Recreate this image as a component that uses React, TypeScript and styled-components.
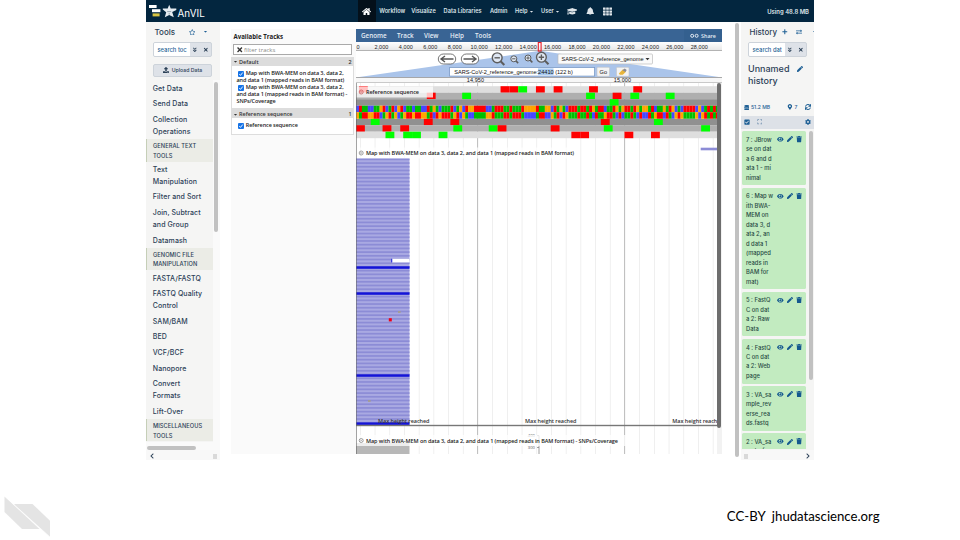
import React from "react";
import styled, { createGlobalStyle } from "styled-components";
import {
  FaHome, FaGraduationCap, FaBell, FaTh, FaRegStar, FaCaretDown, FaAngleDoubleDown,
  FaTimes, FaUpload, FaPlus, FaExchangeAlt, FaPen, FaDatabase, FaMapMarkerAlt, FaSync,
  FaCheckSquare, FaExpand, FaCog, FaEye, FaTrash, FaChevronLeft, FaChevronRight,
} from "react-icons/fa";

const UI = `Inter, Roboto, "Liberation Sans", sans-serif`;
const TRACK = `"Open Sans", "Noto Sans", sans-serif`;
const ARIAL = `"Liberation Sans", Arial, sans-serif`;

const Global = createGlobalStyle`
  * { box-sizing: border-box; }
  html, body { margin: 0; padding: 0; background: #fff; overflow: hidden; }
  svg { display: block; flex: none; }
`;

const Slide = styled.main`
  width: 960px; height: 540px; display: flex; flex-direction: column; overflow: hidden;
  background: #fff;
`;
const Shot = styled.section`
  width: 668px; height: 460px; margin-left: 146px; display: flex; flex-direction: column; flex: none;
  font-family: ${UI};
`;

/* ---- navigation bar ---- */
const Nav = styled.header`
  height: 22px; flex: none; display: flex; align-items: center; background: #03263f; color: #dfe5ea;
  font-size: 5.6px; font-weight: 600; white-space: nowrap;
`;
const Brand = styled.div`
  width: 212px; height: 22px; padding-left: 3px; display: flex; align-items: center;
`;
const BrandName = styled.span`
  font: 400 9.8px ${UI}; color: #fff; margin: 4px 0 0 0.5px; letter-spacing: 0.1px;
`;
const HomeTab = styled.div`
  width: 17.6px; height: 22px; background: #04101a; display: grid; place-items: center; color: #fff;
`;
const NavItem = styled.span<{ $w: number; $s?: number }>`
  width: ${p => p.$w}px; display: flex; align-items: center; gap: 1.5px; letter-spacing: ${p => p.$s ?? 0}px;
`;
const Usage = styled.span`margin-left: auto; padding-right: 5px; font-size: 5.9px;`;

/* ---- workspace ---- */
const Work = styled.div`height: 438px; display: flex;`;

const ToolPanel = styled.aside`
  width: 74px; height: 438px; background: #f5f5f4; display: flex; flex-direction: column; color: #2c4157;
`;
const PanelHead = styled.div<{ $left: number }>`
  height: 19.5px; padding-left: ${p => p.$left}px; display: flex; align-items: center; font-size: 8px;
  font-weight: 500; color: #2c4157; flex: none; overflow: hidden;
`;
const HeadIcon = styled.span<{ $ml: number }>`margin-left: ${p => p.$ml}px; color: #1f6095;`;
const Search = styled.div<{ $ml: number }>`
  width: 59px; height: 14.5px; margin: 0.7px 0 0 ${p => p.$ml}px; display: flex; border: 0.6px solid #cdd3da; border-radius: 2px;
  background: #dee2e8; overflow: hidden; flex: none; color: #2c4157;
`;
const SearchText = styled.span`
  width: 36px; background: #fff; padding-left: 3.5px; font-size: 5.8px; line-height: 14px; color: #2a6496; white-space: nowrap;
  overflow: hidden; font-weight: 500;
`;
const SearchBtn = styled.span`flex: 1; display: grid; place-items: center;`;
const Upload = styled.div`
  width: 59px; height: 13px; margin: 7.3px 0 0 7px; flex: none; border: 0.6px solid #cdd3da; border-radius: 2px;
  background: #dee2e8; display: flex; align-items: center; justify-content: center; gap: 3px; font-size: 5.2px;
  font-weight: 500; white-space: nowrap;
`;
const ToolArea = styled.div`height: 361.5px; margin-top: 3.4px; display: flex; flex: none;`;
const ToolList = styled.div`width: 67px; flex: none;`;
const Tool = styled.div`
  padding: 2.3px 0 1.3px 6.8px; font-size: 7px; line-height: 12px; font-weight: 500; letter-spacing: 0.09px;
  white-space: pre; color: #2c4157;
`;
const Category = styled.div`
  height: 22.4px; padding: 2px 0 0 6px; border-left: 1px solid #c6cfb8; background: #ebece6;
  font-size: 5.7px; line-height: 9.5px; font-weight: 500; letter-spacing: 0.06px; white-space: pre; color: #2c4157;
`;
const Rail = styled.div`width: 7px; background: #fafafa; padding: 1.5px 0 0 1.3px;`;
const Thumb = styled.div<{ $h: number; $w?: number }>`
  width: ${p => p.$w ?? 3.6}px; height: ${p => p.$h}px; border-radius: 2px; background: #c1c1c1;
`;
const HRail = styled.div`height: 8px; padding: 4.2px 0 0 1px; background: #fafafa; flex: none;`;
const PanelFoot = styled.div`
  height: 10px; display: flex; align-items: center; justify-content: space-between; padding: 2px 3px 0; color: #2c4157;
  margin-top: auto; flex: none; background: #f8f8f8;
`;
const Grip = styled.span`width: 4px; height: 5px; background: #d9d9d9;`;

/* ---- track selector ---- */
const Selector = styled.section`
  width: 125px; height: 425px; margin: 7px 0 0 11px; background: #fafafa; font-family: ${TRACK}; color: #222;
  display: flex; flex-direction: column; flex: none;
`;
const SelTitle = styled.h2`margin: 3px 0 0 2.5px; font-size: 6.1px; font-weight: 700; line-height: 10px;`;
const Filter = styled.div`
  width: 118.5px; height: 11px; margin: 2px 0 1.8px 2px; border: 1px solid #aaa; background: #fff; display: flex; align-items: center;
  padding-left: 1.5px; gap: 1px; font-size: 6px; color: #888; flex: none;
`;
const Group = styled.div`width: 122.5px; border: 0.5px solid #ddd; background: #fff; flex: none;`;
const GroupHead = styled.div`
  height: 8.3px; display: flex; align-items: center; background: #dcdcdc; padding: 0 1px 0 1px; font-size: 5.5px; font-weight: 600;
  gap: 1px; color: #333;
`;
const Count = styled.span`margin-left: auto; font-size: 5.4px;`;
const TrackItem = styled.div`
  padding-left: 4.5px; font-size: 5.5px; line-height: 6.85px; font-weight: 600; white-space: pre; letter-spacing: -0.09px;
`;
const FirstLine = styled.div`display: flex; align-items: center; gap: 1.8px; padding-left: 1.5px; height: 6.85px;`;
const GroupBody = styled.div<{ $h: number; $t: number }>`height: ${p => p.$h}px; padding-top: ${p => p.$t}px;`;

/* ---- genome browser ---- */
const Browser = styled.section`
  width: 366px; height: 425px; margin-top: 7px; display: flex; flex-direction: column; flex: none; font-family: ${TRACK};
`;
const Menu = styled.div`
  height: 13px; background: #396494; color: #e4ecf5; display: flex; align-items: center; font-size: 6.3px; font-weight: 600;
  flex: none; white-space: nowrap;
`;
const MenuItem = styled.span<{ $w: number }>`width: ${p => p.$w}px;`;
const Share = styled.span`
  margin-left: auto; width: 38px; height: 12px; display: flex; align-items: center; justify-content: center; gap: 2px;
  background: #34608f; font-size: 5.4px;
`;
const Overview = styled.svg`font-family: ${ARIAL};`;
const Tracks = styled.div`display: flex; height: 371px;`;
const VBar = styled.div`width: 5px; background: #f2f2f2;`;
const VThumb = styled.div`width: 4.4px; height: 345px; background: #6d6d6d; border-radius: 2px;`;

/* ---- history ---- */
const Divider = styled.div`width: 19px; padding: 1px 0 0 12.8px; background: #fff; flex: none;`;
const History = styled.aside`
  width: 73px; height: 438px; background: #f5f5f4; color: #2c4157; display: flex; flex-direction: column; overflow: hidden; flex: none;
`;
const HistTitle = styled.div`
  height: 24px; margin: 6.6px 0 0 7px; display: flex; gap: 7.5px; font-size: 9px; line-height: 11.3px; font-weight: 500; white-space: pre;
  flex: none;
`;
const PenSlot = styled.span`padding-top: 3px; color: #1f6095;`;
const Stats = styled.div`
  height: 12px; margin-top: 14px; padding: 0 3px 0 3px; display: flex; align-items: center; gap: 1.5px; color: #1f6095;
  font-size: 5.1px; flex: none; font-weight: 500;
`;
const Push = styled.span<{ $m?: number }>`margin-left: ${p => (p.$m ? `${p.$m}px` : "auto")};`;
const Bulk = styled.div`
  height: 13px; margin-top: 2.4px; padding: 0 3px; background: #dde1e7; display: flex; align-items: center; color: #1f6095; flex: none;
`;
const CardArea = styled.div`height: 320.5px; display: flex; overflow: hidden; flex: none; padding: 2.3px 0 0 1.3px;`;
const Cards = styled.div`width: 64px; display: flex; flex-direction: column; gap: 2.3px; flex: none;`;
const Card = styled.article`
  background: #c2ebc0; border-radius: 1.5px; padding: 3.8px 3px 3.2px 3.7px; display: flex; flex: none; font-size: 5.8px;
  line-height: 9.47px; color: #294b45; font-weight: 500;
`;
const CardText = styled.div`width: 30.4px; white-space: pre;`;
const CardIcons = styled.div`display: flex; gap: 3.3px; height: 9.4px; align-items: center; color: #14588f; margin-left: 0.6px;`;

/* ---- slide footer ---- */
const Footer = styled.footer`flex: 1; display: flex; justify-content: space-between; padding: 36px 80.4px 0 4px;`;
const Credit = styled.p`margin: 11px 0 0; font: 400 13.2px Lato, sans-serif; line-height: 18px; color: #000; white-space: pre;`;

/* Bases shown across the view, 2.95px each */
const SEQ = ("CTAACCAAGTCATCGTCAACAACCTAGACAAATCAGCTGGTTTTCCATTTAATAAATGGGGTAAGGCTAGACTTTATTATGATTCAATGAGTTATGAGGATCAAGATGCACTTTTCGCATATACAAAACGTAATG").slice(0, 123);
const BP = 2.95;
const COLOR: Record<string, string> = { A: "#00bf00", C: "#4747ff", G: "#ffa500", T: "#ff0000" };
const PAIR: Record<string, string> = { A: "T", T: "A", C: "G", G: "C" };
const FWD: Record<string, string> = { TAA: "#f00", TAG: "#f00", TGA: "#f00", ATG: "#0f0", CTG: "#0f0", TTG: "#0f0" };
const REV: Record<string, string> = { TTA: "#f00", CTA: "#f00", TCA: "#f00", CAT: "#0f0", CAG: "#0f0", CAA: "#0f0" };
const ROWH = 6.5;
const FRAMES = [
  { y: 3.2, fill: "#dedede", frame: 1, table: FWD },
  { y: 9.7, fill: "#afafaf", frame: 0, table: FWD },
  { y: 16.2, fill: "#909090", frame: 2, table: FWD },
  { y: 35.7, fill: "#909090", frame: 2, table: REV },
  { y: 42.2, fill: "#afafaf", frame: 0, table: REV },
  { y: 48.7, fill: "#dedede", frame: 1, table: REV },
];

function Sequence() {
  return (
    <g>
      {FRAMES.map((f, k) => (
        <g key={k}>
          <rect x={0} y={f.y} width={361.5} height={ROWH} fill={f.fill} />
          {SEQ.split("").map((_, i) => {
            const c = i % 3 === f.frame ? f.table[SEQ.slice(i, i + 3)] : undefined;
            return c ? <rect key={i} x={i * BP} y={f.y} width={BP * 3} height={ROWH} fill={c} /> : null;
          })}
        </g>
      ))}
      {SEQ.split("").map((b, i) => (
        <g key={i}>
          <rect x={i * BP} y={22.7} width={BP + 0.15} height={ROWH} fill={COLOR[b]} />
          <rect x={i * BP} y={29.2} width={BP + 0.15} height={ROWH} fill={COLOR[PAIR[b]]} />
        </g>
      ))}
    </g>
  );
}

const Label = ({ y, w, tw, text, bg, dot }: { y: number; w: number; tw: number; text: string; bg: string; dot: string }) => (
  <g>
    <rect x={0} y={y - 5.5} width={w} height={11} fill={bg} />
    <circle cx={5.2} cy={y} r={2} fill="none" stroke={dot} strokeWidth={0.8} />
    <path d={`M4.3 ${y - 0.9}l1.8 1.8m0-1.8l-1.8 1.8`} stroke={dot} strokeWidth={0.5} />
    <text x={10} y={y + 2} fontSize={5.5} fontWeight={600} textLength={tw} fill="#222">{text}</text>
  </g>
);

const READ = 3.71;
const BLUE_READS = [183.3, 209.3, 291.3, 339.4];

function TrackCanvas() {
  const reads = Array.from({ length: 72 }, (_, i) => 75.5 + i * READ);
  const grid = Array.from({ length: 25 }, (_, i) => 4 + i * 14.7);
  return (
    <svg width={361} height={371} viewBox="0 0 361 371" fontFamily='"Open Sans", "Noto Sans", sans-serif'>
      <rect width={361} height={371} fill="#fff" />
      {grid.map((x, i) => <rect key={i} x={x} y={0} width={0.7} height={371} fill="#e9e9e9" />)}
      <rect x={121.2} y={0} width={0.8} height={371} fill="#b4b4b4" />
      <rect x={268} y={0} width={0.8} height={371} fill="#b4b4b4" />
      <Sequence />
      <Label y={9} w={77} tw={53} text="Reference sequence" bg="rgba(255,255,255,.76)" dot="#c55" />
      <rect x={0} y={75} width={53.5} height={267} fill="#a9a9e2" />
      {reads.map((y, i) => <rect key={i} x={0} y={y} width={53.5} height={1.7} fill="#8c8cd6" />)}
      {BLUE_READS.map(y => <rect key={y} x={0} y={y} width={53.5} height={2.5} fill="#1414d8" />)}
      <rect x={36} y={175.8} width={17.5} height={3.6} fill="#fff" />
      <rect x={35} y={175.8} width={1.3} height={3.6} fill="#3c3cda" />
      <rect x={32.8} y={235.2} width={3} height={3.2} fill="#f00018" />
      <path d="M42 229h2.6M12 318h2.6" stroke="#a8a080" strokeWidth={1.6} />
      <rect x={344.7} y={64.7} width={17} height={2.6} fill="#8c8cd6" />
      <Label y={70} w={221} tw={208} text="Map with BWA-MEM on data 3, data 2, and data 1 (mapped reads in BAM format)" bg="rgba(255,255,255,.7)" dot="#888" />
      <rect x={0} y={341.8} width={361} height={1.4} fill="#777" />
      {[22, 169, 316.3].map(x => (
        <text key={x} x={x} y={340.4} fontSize={5.5} fontWeight={600} textLength={51.5} fill="#333">Max height reached</text>
      ))}
      <rect x={0} y={360} width={53.5} height={11} fill="#b8b8b8" />
      <text x={171.8} y={354.2} fontSize={4.2} fill="#555">400</text>
      <text x={171.8} y={366} fontSize={4.2} fill="#555">300</text>
      <path d="M181 352.6h2v18.4M181 364.5h2" fill="none" stroke="#777" strokeWidth={0.7} />
      <Label y={357.5} w={272} tw={252} text="Map with BWA-MEM on data 3, data 2, and data 1 (mapped reads in BAM format) - SNPs/Coverage" bg="rgba(255,255,255,.75)" dot="#888" />
      <rect x={0} y={0} width={0.6} height={371} fill="#666" />
    </svg>
  );
}

const Magnifier = ({ x, y, r, plus }: { x: number; y: number; r: number; plus?: boolean }) => (
  <g stroke="#5d5d5d" fill="none" strokeWidth={r > 3 ? 1.4 : 1}>
    <circle cx={x} cy={y} r={r} fill="#dfe7f3" />
    <path d={`M${x + r * 0.7} ${y + r * 0.7}l${r * 0.75} ${r * 0.75}`} strokeWidth={r > 3 ? 2.1 : 1.5} />
    <path d={`M${x - r * 0.55} ${y}h${r * 1.1}${plus ? `M${x} ${y - r * 0.55}v${r * 1.1}` : ""}`} />
  </g>
);

const PanArrow = ({ x, flip }: { x: number; flip?: boolean }) => (
  <g transform={`translate(${x} 17) scale(${flip ? -1 : 1} 1)`} fill="none" stroke="#555">
    <rect x={-8.7} y={-5} width={17.4} height={10} rx={5} fill="#fff" strokeWidth={0.8} />
    <path d="M6.5 0h-12M-2 -3l-4 3l4 3" strokeWidth={1.4} />
  </g>
);

function OverviewBar() {
  const ticks = Array.from({ length: 15 }, (_, i) => i);
  return (
    <Overview width={366} height={41} viewBox="0 0 366 41">
      <defs>
        <linearGradient id="scale" x1="0" x2="0" y1="0" y2="1">
          <stop offset="0" stopColor="#fff" /><stop offset="1" stopColor="#e6e6e6" />
        </linearGradient>
      </defs>
      <rect width={366} height={8.6} fill="url(#scale)" />
      <rect y={8.3} width={366} height={0.7} fill="#999" />
      {ticks.map(i => (
        <text key={i} x={i === 0 ? 0.6 : 25.4 + (i - 1) * 24.45} y={6.8} fontSize={5.5} textAnchor={i ? "middle" : "start"} fill="#222"
          textLength={i === 0 ? 3 : i < 5 ? 14 : 17.2}>
          {i === 0 ? "0" : `${i * 2},000`}
        </text>
      ))}
      <path d="M182.5 9h3L366 35.5H0z" fill="#aac4ea" />
      <rect x={182.3} y={0.5} width={2.8} height={8.6} fill="none" stroke="#e8202a" strokeWidth={1.1} />
      <PanArrow x={91} />
      <PanArrow x={114} flip />
      <Magnifier x={141.2} y={15.8} r={4.9} />
      <Magnifier x={157.8} y={16.8} r={3} />
      <Magnifier x={172} y={16} r={3} plus />
      <Magnifier x={185.4} y={15.2} r={4.9} plus />
      <rect x={202} y={12} width={94.5} height={10} rx={1} fill="#fafafa" stroke="#bbb" strokeWidth={0.7} />
      <text x={205.5} y={19} fontSize={5.6} textLength={82} fill="#111">SARS-CoV-2_reference_genome</text>
      <path d="M289.5 16h4l-2 2.3z" fill="#333" />
      <rect x={93.6} y={25.5} width={145} height={8.6} fill="#fff" stroke="#7b9ac6" strokeWidth={0.8} />
      <rect x={182} y={26.4} width={15.5} height={6.8} fill="#a9cbf2" />
      <text x={98.3} y={31.8} fontSize={5.6} textLength={118.5} fill="#111">SARS-CoV-2_reference_genome:24410 (122 b)</text>
      <rect x={241} y={25.3} width={12.5} height={9} rx={1} fill="#f4f4f4" stroke="#c2c2c2" strokeWidth={0.6} />
      <text x={243.6} y={32} fontSize={5.6} textLength={7.4} fill="#111">Go</text>
      <rect x={260.5} y={25.3} width={12.5} height={9} rx={1} fill="#f4f4f4" stroke="#c2c2c2" strokeWidth={0.6} />
      <path d="M262.8 31.5l4.2-4.2l3 2.4l-3.2 3h-3z" fill="#e7b53b" /><path d="M266.4 28.2l2.3-1.8l2 1.6l-1.2 2z" fill="#8a8a94" />
      <rect y={35.5} width={366} height={5.5} fill="#f7f7f7" />
      <rect y={35.3} width={366} height={0.7} fill="#888" />
      <rect y={40.4} width={366} height={0.6} fill="#aaa" />
      <text x={110.8} y={40.4} fontSize={5.5} textLength={17.2} fill="#111">14,950</text>
      <text x={257.8} y={40.4} fontSize={5.5} textLength={17.2} fill="#111">15,000</text>
    </Overview>
  );
}

const TOOLS: Array<[boolean, string]> = [
  [false, "Get Data"], [false, "Send Data"], [false, "Collection\nOperations"], [true, "GENERAL TEXT\nTOOLS"],
  [false, "Text\nManipulation"], [false, "Filter and Sort"], [false, "Join, Subtract\nand Group"], [false, "Datamash"],
  [true, "GENOMIC FILE\nMANIPULATION"], [false, "FASTA/FASTQ"], [false, "FASTQ Quality\nControl"], [false, "SAM/BAM"],
  [false, "BED"], [false, "VCF/BCF"], [false, "Nanopore"], [false, "Convert\nFormats"], [false, "Lift-Over"],
  [true, "MISCELLANEOUS\nTOOLS"],
];

const HISTORY = [
  "7 : JBrow\nse on dat\na 6 and d\nata 1 - mi\nnimal",
  "6 : Map w\nith BWA-\nMEM on\ndata 3, d\nata 2, an\nd data 1\n(mapped\nreads in\nBAM for\nmat)",
  "5 : FastQ\nC on dat\na 2: Raw\nData",
  "4 : FastQ\nC on dat\na 2: Web\npage",
  "3 : VA_sa\nmple_rev\nerse_rea\nds.fastq",
  "2 : VA_sa\nmple_for",
];

const Check = () => (
  <svg width={6} height={6} viewBox="0 0 12 12"><rect width={12} height={12} rx={2} fill="#1673e6" /><path d="M2.5 6l2.5 2.8L9.5 3" stroke="#fff" strokeWidth={1.8} fill="none" /></svg>
);

const SearchBox = ({ text, ml }: { text: string; ml: number }) => (
  <Search $ml={ml}>
    <SearchText>{text}</SearchText>
    <SearchBtn><FaAngleDoubleDown size={5.6} /></SearchBtn>
    <SearchBtn><FaTimes size={5.6} /></SearchBtn>
  </Search>
);

export default function App() {
  return (
    <Slide>
      <Global />
      <Shot>
        <Nav>
          <Brand>
            <svg width={13} height={14} viewBox="0 0 13 14">
              <rect x={0} y={1} width={7.6} height={3} fill="#fff" /><rect x={3} y={5.2} width={8.4} height={3} fill="#fff" />
              <rect x={3.6} y={9.4} width={7} height={3} fill="#d8c443" />
            </svg>
            <svg width={15} height={14} viewBox="0 0 15 14">
              <path d="M7.2 .8l1.5 3.7h5.6v1.6L10.2 8l1.6 5.3L7.2 11l-4.4 2.3L4.2 8.2 .8 5.4V4.6h4.9z" fill="#e6ecf1" />
              <path d="M5.2 7.6h4M7.2 9v1.6" stroke="#5d7385" strokeWidth={0.6} />
            </svg>
            <BrandName>AnVIL</BrandName>
          </Brand>
          <HomeTab><FaHome size={9} /></HomeTab>
          <NavItem $w={35.6}><Push $m={2.2} />Workflow</NavItem>
          <NavItem $w={32.4}>Visualize</NavItem>
          <NavItem $w={46.5} $s={0.04}>Data Libraries</NavItem>
          <NavItem $w={25}>Admin</NavItem>
          <NavItem $w={26}>Help <FaCaretDown size={5} /></NavItem>
          <NavItem $w={25.5}>User <FaCaretDown size={5} /></NavItem>
          <NavItem $w={19}><FaGraduationCap size={10.5} /></NavItem>
          <NavItem $w={17}><FaBell size={8.5} /></NavItem>
          <NavItem $w={12}><FaTh size={9} /></NavItem>
          <Usage>Using 48.8 MB</Usage>
        </Nav>
        <Work>
          <ToolPanel>
            <PanelHead $left={8.5}>Tools
              <HeadIcon $ml={13.5}><FaRegStar size={6.5} /></HeadIcon>
              <HeadIcon $ml={8}><FaCaretDown size={5} /></HeadIcon>
            </PanelHead>
            <SearchBox text="search toc" ml={7} />
            <Upload><FaUpload size={6} />Upload Data</Upload>
            <ToolArea>
              <ToolList>
                {TOOLS.map(([head, text]) => (head ? <Category key={text}>{text}</Category> : <Tool key={text}>{text}</Tool>))}
              </ToolList>
              <Rail><Thumb $h={150} /></Rail>
            </ToolArea>
            <HRail><Thumb $h={3.6} $w={49} /></HRail>
            <PanelFoot><FaChevronLeft size={6} /><Grip /></PanelFoot>
          </ToolPanel>

          <Selector>
            <SelTitle>Available Tracks</SelTitle>
            <Filter><FaTimes size={7.5} color="#333" />filter tracks</Filter>
            <Group>
              <GroupHead><FaCaretDown size={5} />Default<Count>2</Count></GroupHead>
              <GroupBody $h={42} $t={4.4}>
                <TrackItem><FirstLine><Check />Map with BWA-MEM on data 3, data 2,</FirstLine>and data 1 (mapped reads in BAM format)</TrackItem>
                <TrackItem><FirstLine><Check />Map with BWA-MEM on data 3, data 2,</FirstLine>{"and data 1 (mapped reads in BAM format) -\nSNPs/Coverage"}</TrackItem>
              </GroupBody>
            </Group>
            <Group>
              <GroupHead><FaCaretDown size={5} />Reference sequence<Count>1</Count></GroupHead>
              <GroupBody $h={15.5} $t={4}>
                <TrackItem><FirstLine><Check />Reference sequence</FirstLine></TrackItem>
              </GroupBody>
            </Group>
          </Selector>

          <Browser>
            <Menu>
              <MenuItem $w={5} />
              <MenuItem $w={36}>Genome</MenuItem><MenuItem $w={27}>Track</MenuItem><MenuItem $w={26}>View</MenuItem>
              <MenuItem $w={25}>Help</MenuItem><MenuItem $w={25}>Tools</MenuItem>
              <Share><svg width={9} height={5} viewBox="0 0 9 5" fill="none" stroke="#e4ecf5"><circle cx={2.2} cy={2.8} r={1.5} /><circle cx={6.6} cy={2.8} r={1.5} /></svg>Share</Share>
            </Menu>
            <OverviewBar />
            <Tracks><TrackCanvas /><VBar><VThumb /></VBar></Tracks>
          </Browser>

          <Divider><Thumb $h={434} $w={4} /></Divider>
          <History>
            <PanelHead $left={8.5}>History
              <HeadIcon $ml={5}><FaPlus size={5.6} /></HeadIcon>
              <HeadIcon $ml={8.8}><FaExchangeAlt size={6} /></HeadIcon>
              <HeadIcon $ml={9.5}><FaCaretDown size={5} /></HeadIcon>
            </PanelHead>
            <SearchBox text="search dat" ml={7} />
            <HistTitle><span>{"Unnamed\nhistory"}</span><PenSlot><FaPen size={6} /></PenSlot></HistTitle>
            <Stats><FaDatabase size={5.4} />51.2 MB<Push /><FaMapMarkerAlt size={5.8} />7<Push $m={4.5} /><FaSync size={6} /></Stats>
            <Bulk><FaCheckSquare size={6} /><Push $m={6.5} /><FaExpand size={5.5} color="#7593b0" /><Push /><FaCog size={6} /></Bulk>
            <CardArea>
              <Cards>
                {HISTORY.map(t => (
                  <Card key={t}>
                    <CardText>{t}</CardText>
                    <CardIcons><FaEye size={6.6} /><FaPen size={6} /><FaTrash size={6.2} /></CardIcons>
                  </Card>
                ))}
              </Cards>
              <Push $m={3} />
              <Thumb $h={249} $w={3.6} />
            </CardArea>
            <PanelFoot><Grip /><FaChevronRight size={6} /></PanelFoot>
          </History>
        </Work>
      </Shot>
      <Footer>
        <svg width={48} height={44} viewBox="4 496 48 44">
          <path d="M4.5 496.5V512L22 529h17.5z" fill="#e4e4e4" />
          <path d="M15 504h17.5L50 520.7V537L14 504.5z" fill="#e4e4e4" />
          <path d="M4.5 496L50 537" stroke="#fff" strokeWidth={0.6} />
        </svg>
        <Credit>{"CC-BY  jhudatascience.org"}</Credit>
      </Footer>
    </Slide>
  );
}
